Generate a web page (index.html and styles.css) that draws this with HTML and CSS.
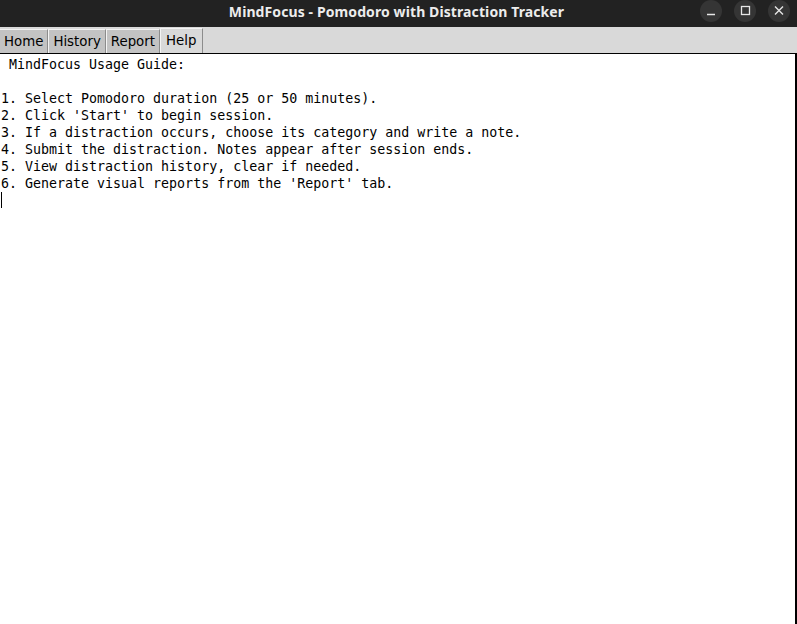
FILE: index.html
```html
<!DOCTYPE html>
<html>
<head>
<meta charset="utf-8">
<title>MindFocus</title>
<link rel="stylesheet" href="styles.css">
</head>
<body>
<div class="window">
  <div class="titlebar">
    <div class="title">MindFocus - Pomodoro with Distraction Tracker</div>
    <div class="controls">
      <span class="ctl"><svg width="22" height="22" viewBox="0 0 22 22"><line x1="7" y1="14.5" x2="15" y2="14.5" stroke="#e6e6e6" stroke-width="1.5"/></svg></span>
      <span class="ctl"><svg width="22" height="22" viewBox="0 0 22 22"><rect x="7.5" y="6.5" width="8" height="8" fill="none" stroke="#e6e6e6" stroke-width="1.3"/></svg></span>
      <span class="ctl"><svg width="22" height="22" viewBox="0 0 22 22"><path d="M7 6.5 L15 14.5 M15 6.5 L7 14.5" stroke="#e6e6e6" stroke-width="1.4"/></svg></span>
    </div>
  </div>
  <div class="tabbar">
    <div class="tab">Home</div>
    <div class="tab">History</div>
    <div class="tab">Report</div>
    <div class="tab active">Help</div>
  </div>
  <div class="textarea">
    <pre class="guide"> MindFocus Usage Guide:

1. Select Pomodoro duration (25 or 50 minutes).
2. Click 'Start' to begin session.
3. If a distraction occurs, choose its category and write a note.
4. Submit the distraction. Notes appear after session ends.
5. View distraction history, clear if needed.
6. Generate visual reports from the 'Report' tab.
<span class="cursor"></span></pre>
  </div>
</div>
</body>
</html>
```

FILE: styles.css
```css
html, body {
  margin: 0;
  padding: 0;
  background: #d9d9d9;
}
.window {
  width: 797px;
  height: 624px;
  display: flex;
  flex-direction: column;
  overflow: hidden;
}
.titlebar {
  height: 27px;
  background: #222222;
  display: flex;
  align-items: center;
  justify-content: center;
  position: relative;
  flex: none;
}
.title {
  color: #ececec;
  font-family: "Noto Sans", "DejaVu Sans", sans-serif;
  font-weight: bold;
  font-size: 14px;
  letter-spacing: 0.1px;
  margin-top: -4px;
  margin-right: 4px;
}
.controls {
  position: absolute;
  right: 7px;
  top: 0;
  display: flex;
  gap: 12px;
}
.ctl {
  width: 22px;
  height: 22px;
  border-radius: 50%;
  background: #353535;
  display: block;
}
.ctl svg { display: block; }
.tabbar {
  height: 26px;
  background: #d9d9d9;
  display: flex;
  align-items: flex-end;
  flex: none;
}
.tab {
  height: 24px;
  box-sizing: border-box;
  padding: 0 4px;
  background: #c3c3c3;
  border-top: 1px solid #f4f4f4;
  border-left: 1px solid #f4f4f4;
  border-right: 1px solid #8c8c8c;
  font-family: "DejaVu Sans", sans-serif;
  font-size: 13.33px;
  color: #000;
  line-height: 23px;
}
.tab:first-child { border-left: none; }
.tab.active {
  background: #d9d9d9;
  height: 25px;
  padding: 0 6px 0 5px;
}
.textarea {
  flex: 1;
  background: #ffffff;
  border-top: 1px solid #000;
  border-right: 2px solid #000;
  box-sizing: border-box;
  margin-right: 0;
}
.guide {
  margin: 0;
  padding: 2px 0 0 1px;
  font-family: "DejaVu Sans Mono", monospace;
  font-size: 13.3px;
  line-height: 17px;
  color: #000;
}
.cursor {
  display: inline-block;
  width: 1px;
  height: 16px;
  background: #000;
  vertical-align: top;
  margin-top: 0;
}
```
